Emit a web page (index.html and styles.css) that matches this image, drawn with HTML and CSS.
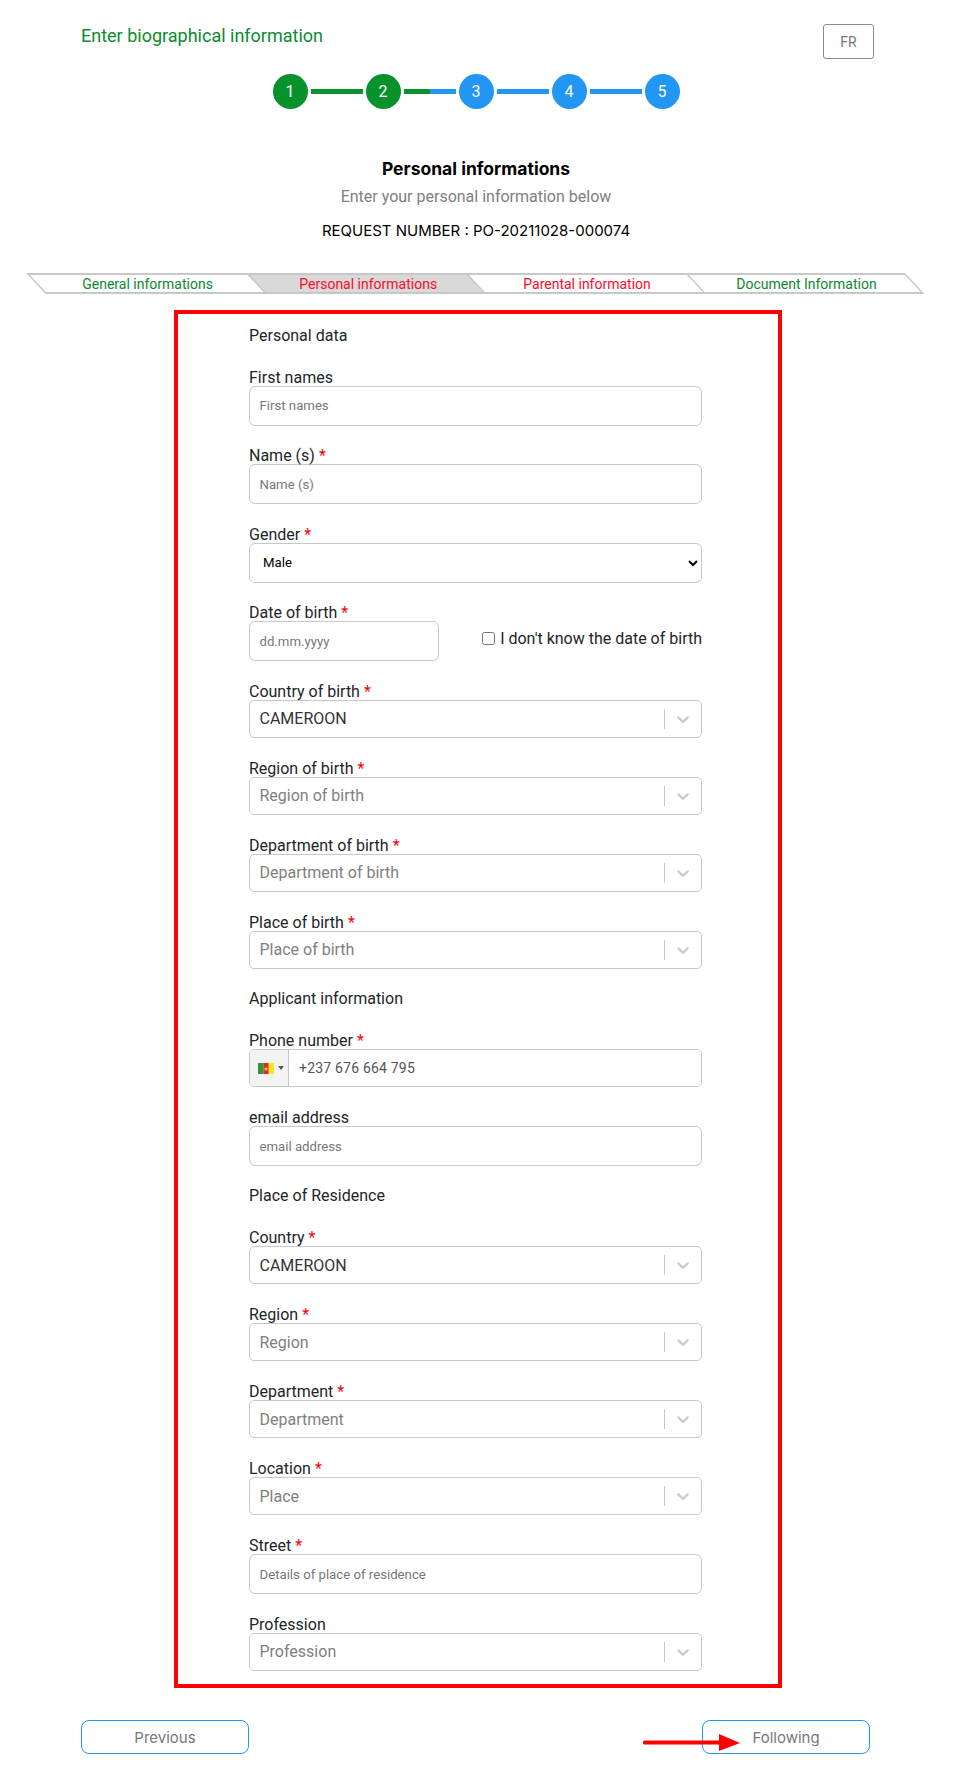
FILE: index.html
```html
<!DOCTYPE html>
<html lang="en">
<head>
<meta charset="utf-8">
<title>Enter biographical information</title>
<link rel="stylesheet" href="styles.css">
</head>
<body>
<div class="page">
  <header class="top">
    <h1 class="heading">Enter biographical information</h1>
    <button class="lang" type="button">FR</button>
  </header>

  <div class="stepper">
    <span class="dot done">1</span><span class="bar done"></span>
    <span class="dot done">2</span><span class="bar half"></span>
    <span class="dot">3</span><span class="bar"></span>
    <span class="dot">4</span><span class="bar"></span>
    <span class="dot">5</span>
  </div>

  <div class="intro">
    <h2 class="title">Personal informations</h2>
    <p class="sub">Enter your personal information below</p>
    <p class="req">REQUEST NUMBER : PO-20211028-000074</p>
  </div>

  <ul class="tabs">
    <li class="tab green"><span>General informations</span></li>
    <li class="tab red active"><span>Personal informations</span></li>
    <li class="tab red"><span>Parental information</span></li>
    <li class="tab green"><span>Document Information</span></li>
  </ul>

  <form class="frame">
    <div class="section">Personal data</div>
    <div class="field"><label>First names</label><input class="input" type="text" placeholder="First names"></div>
    <div class="field"><label>Name (s) <i>*</i></label><input class="input" type="text" placeholder="Name (s)"></div>
    <div class="field"><label>Gender <i>*</i></label><select class="input native"><option>Male</option><option>Female</option></select></div>
    <div class="field">
      <label>Date of birth <i>*</i></label>
      <div class="dob">
        <input class="input date" type="text" placeholder="dd.mm.yyyy">
        <label class="check"><input type="checkbox"><span>I don't know the date of birth</span></label>
      </div>
    </div>
    <div class="field"><label>Country of birth <i>*</i></label>
      <div class="rs"><span class="val">CAMEROON</span><b class="sep"></b><svg class="chev" viewBox="0 0 20 20"><path d="M4.516 7.548c0.436-0.446 1.043-0.481 1.576 0l3.908 3.747 3.908-3.747c0.533-0.481 1.141-0.446 1.576 0 0.436 0.445 0.408 1.197 0 1.615-0.406 0.418-4.695 4.502-4.695 4.502-0.217 0.223-0.502 0.335-0.787 0.335s-0.57-0.112-0.789-0.335c0 0-4.287-4.084-4.695-4.502s-0.436-1.17 0-1.615z"/></svg></div></div>
    <div class="field"><label>Region of birth <i>*</i></label>
      <div class="rs"><span class="ph">Region of birth</span><b class="sep"></b><svg class="chev" viewBox="0 0 20 20"><path d="M4.516 7.548c0.436-0.446 1.043-0.481 1.576 0l3.908 3.747 3.908-3.747c0.533-0.481 1.141-0.446 1.576 0 0.436 0.445 0.408 1.197 0 1.615-0.406 0.418-4.695 4.502-4.695 4.502-0.217 0.223-0.502 0.335-0.787 0.335s-0.57-0.112-0.789-0.335c0 0-4.287-4.084-4.695-4.502s-0.436-1.17 0-1.615z"/></svg></div></div>
    <div class="field"><label>Department of birth <i>*</i></label>
      <div class="rs"><span class="ph">Department of birth</span><b class="sep"></b><svg class="chev" viewBox="0 0 20 20"><path d="M4.516 7.548c0.436-0.446 1.043-0.481 1.576 0l3.908 3.747 3.908-3.747c0.533-0.481 1.141-0.446 1.576 0 0.436 0.445 0.408 1.197 0 1.615-0.406 0.418-4.695 4.502-4.695 4.502-0.217 0.223-0.502 0.335-0.787 0.335s-0.57-0.112-0.789-0.335c0 0-4.287-4.084-4.695-4.502s-0.436-1.17 0-1.615z"/></svg></div></div>
    <div class="field"><label>Place of birth <i>*</i></label>
      <div class="rs"><span class="ph">Place of birth</span><b class="sep"></b><svg class="chev" viewBox="0 0 20 20"><path d="M4.516 7.548c0.436-0.446 1.043-0.481 1.576 0l3.908 3.747 3.908-3.747c0.533-0.481 1.141-0.446 1.576 0 0.436 0.445 0.408 1.197 0 1.615-0.406 0.418-4.695 4.502-4.695 4.502-0.217 0.223-0.502 0.335-0.787 0.335s-0.57-0.112-0.789-0.335c0 0-4.287-4.084-4.695-4.502s-0.436-1.17 0-1.615z"/></svg></div></div>

    <div class="section later">Applicant information</div>
    <div class="field"><label>Phone number <i>*</i></label>
      <div class="phone">
        <div class="flagbox">
          <svg class="flag" viewBox="0 0 16 11"><rect width="5.4" height="11" fill="#2a9a3c"/><rect x="5.4" width="5.3" height="11" fill="#e3262e"/><rect x="10.7" width="5.3" height="11" fill="#fbe417"/><path d="M8 3.6l.6 1.7h1.7l-1.4 1 .5 1.7L8 7l-1.4 1 .5-1.7-1.4-1h1.7z" fill="#fbe417"/></svg>
          <span class="caret"></span>
        </div>
        <input class="tel" type="text" value="+237 676 664 795">
      </div>
    </div>
    <div class="field"><label>email address</label><input class="input" type="text" placeholder="email address"></div>

    <div class="section later">Place of Residence</div>
    <div class="field"><label>Country <i>*</i></label>
      <div class="rs"><span class="val">CAMEROON</span><b class="sep"></b><svg class="chev" viewBox="0 0 20 20"><path d="M4.516 7.548c0.436-0.446 1.043-0.481 1.576 0l3.908 3.747 3.908-3.747c0.533-0.481 1.141-0.446 1.576 0 0.436 0.445 0.408 1.197 0 1.615-0.406 0.418-4.695 4.502-4.695 4.502-0.217 0.223-0.502 0.335-0.787 0.335s-0.57-0.112-0.789-0.335c0 0-4.287-4.084-4.695-4.502s-0.436-1.17 0-1.615z"/></svg></div></div>
    <div class="field"><label>Region <i>*</i></label>
      <div class="rs"><span class="ph">Region</span><b class="sep"></b><svg class="chev" viewBox="0 0 20 20"><path d="M4.516 7.548c0.436-0.446 1.043-0.481 1.576 0l3.908 3.747 3.908-3.747c0.533-0.481 1.141-0.446 1.576 0 0.436 0.445 0.408 1.197 0 1.615-0.406 0.418-4.695 4.502-4.695 4.502-0.217 0.223-0.502 0.335-0.787 0.335s-0.57-0.112-0.789-0.335c0 0-4.287-4.084-4.695-4.502s-0.436-1.17 0-1.615z"/></svg></div></div>
    <div class="field"><label>Department <i>*</i></label>
      <div class="rs"><span class="ph">Department</span><b class="sep"></b><svg class="chev" viewBox="0 0 20 20"><path d="M4.516 7.548c0.436-0.446 1.043-0.481 1.576 0l3.908 3.747 3.908-3.747c0.533-0.481 1.141-0.446 1.576 0 0.436 0.445 0.408 1.197 0 1.615-0.406 0.418-4.695 4.502-4.695 4.502-0.217 0.223-0.502 0.335-0.787 0.335s-0.57-0.112-0.789-0.335c0 0-4.287-4.084-4.695-4.502s-0.436-1.17 0-1.615z"/></svg></div></div>
    <div class="field"><label>Location <i>*</i></label>
      <div class="rs"><span class="ph">Place</span><b class="sep"></b><svg class="chev" viewBox="0 0 20 20"><path d="M4.516 7.548c0.436-0.446 1.043-0.481 1.576 0l3.908 3.747 3.908-3.747c0.533-0.481 1.141-0.446 1.576 0 0.436 0.445 0.408 1.197 0 1.615-0.406 0.418-4.695 4.502-4.695 4.502-0.217 0.223-0.502 0.335-0.787 0.335s-0.57-0.112-0.789-0.335c0 0-4.287-4.084-4.695-4.502s-0.436-1.17 0-1.615z"/></svg></div></div>
    <div class="field"><label>Street <i>*</i></label><input class="input" type="text" placeholder="Details of place of residence"></div>
    <div class="field"><label>Profession</label>
      <div class="rs"><span class="ph">Profession</span><b class="sep"></b><svg class="chev" viewBox="0 0 20 20"><path d="M4.516 7.548c0.436-0.446 1.043-0.481 1.576 0l3.908 3.747 3.908-3.747c0.533-0.481 1.141-0.446 1.576 0 0.436 0.445 0.408 1.197 0 1.615-0.406 0.418-4.695 4.502-4.695 4.502-0.217 0.223-0.502 0.335-0.787 0.335s-0.57-0.112-0.789-0.335c0 0-4.287-4.084-4.695-4.502s-0.436-1.17 0-1.615z"/></svg></div></div>
  </form>

  <div class="nav">
    <button class="navbtn" type="button">Previous</button>
    <div class="nextwrap">
      <button class="navbtn" type="button">Following</button>
      <svg class="arrow" viewBox="0 0 97 17"><rect x="0" y="6.500" width="80" height="4" rx="1.500" fill="#f00"/><path d="M76 0l21 9-21 8z" fill="#f00"/></svg>
    </div>
  </div>
</div>
</body>
</html>
```
FILE: styles.css
```css
* { box-sizing: border-box; }
html, body { margin: 0; background: #fff; }
body { font-family: Roboto, "Liberation Sans", sans-serif; color: #212529; font-size: 16px; }
.page { width: 952px; height: 1785px; overflow: hidden; }

.top { display: flex; justify-content: space-between; align-items: flex-start; padding: 24px 78px 0 81px; }
.heading { margin: 0; font-size: 18px; font-weight: 400; line-height: 24px; color: #0a8c2c; }
.lang { width: 51px; height: 35px; background: #fff; border: 1px solid #8a8a8a; border-radius: 3px; color: #777; font: 400 14px Roboto, sans-serif; padding: 0; }

.stepper { display: flex; justify-content: center; align-items: center; gap: 3px; margin-top: 15px; }
.dot { width: 35px; height: 35px; border-radius: 50%; background: #2196f3; color: #fff; font-size: 16px; display: flex; align-items: center; justify-content: center; }
.dot.done { background: #08922c; }
.bar { width: 52px; height: 5px; background: #2196f3; }
.bar.done { background: #08922c; }
.bar.half { background: linear-gradient(90deg, #08922c 50%, #2196f3 50%); }

.intro { text-align: center; margin-top: 49px; }
.title { margin: 0; font: 700 17.500px/22px Inter, Roboto, sans-serif; color: #000; }
.sub { margin: 6px 0 0; font-size: 16px; font-weight: 400; line-height: 22px; color: #808080; }
.req { margin: 12px 0 0; font: 400 15px/22px Inter, Roboto, sans-serif; color: #000; }

.tabs { list-style: none; display: flex; width: 880px; margin: 31px 0 0 26px; padding: 0; }
.tab { width: 219.500px; height: 21px; border: 2px solid #c8c8c8; border-right-width: 0; transform: skewX(43deg); transform-origin: 0 0; display: flex; align-items: center; justify-content: center; }
.tab:last-child { border-right-width: 2px; }
.tab span { transform: skewX(-43deg); font-size: 14px; line-height: 16px; margin-left: 2px; }
.tab.active { background: #d9d9d9; }
.green { color: #0a8a2c; }
.red { color: #ff0a2a; }

.frame { width: 608px; height: 1378px; margin: 16px 0 0 173.500px; border: 4px solid #f00; padding: 11.500px 0 0 71.500px; }
.section { width: 453px; line-height: 19px; margin-bottom: 22px; }
.section.later { margin-top: 20.500px; }
.field { width: 453px; margin-bottom: 20px; }
.field > label { display: block; line-height: 19px; height: 20px; padding-top: 1px; margin-bottom: -1px; }
.field i { color: #f00; font-style: normal; }
.input { display: block; width: 100%; height: 40px; margin-bottom: -.5px; border: 1px solid #c8c8c8; border-radius: 6px; padding: 0 9.500px; font: 400 13.200px Roboto, sans-serif; color: #000; background: #fff; }
.input::placeholder { color: #777; opacity: 1; }
.native { padding-left: 9px; }

.dob { display: flex; justify-content: space-between; align-items: flex-start; }
.date { width: 190px; }
.check { display: flex; align-items: center; gap: 5px; margin-top: 7.500px; line-height: 20px; }
.check input { width: 13px; height: 13px; margin: 0; }

.rs { display: flex; align-items: center; height: 38px; border: 1px solid #c8c8c8; border-radius: 5px; padding-left: 9.500px; }
.rs > span { flex: 1; font-size: 16px; }
.val { color: #333; }
.ph { color: #808080; }
.sep { width: 1px; height: 20px; background: #c8c8c8; }
.chev { width: 20px; height: 20px; margin: 0 8px; fill: #ccc; }

.phone { display: flex; height: 38px; border: 1px solid #c8c8c8; border-radius: 5px; overflow: hidden; }
.flagbox { width: 39px; background: #f3f3f3; border-right: 1px solid #c8c8c8; display: flex; align-items: center; padding-left: 7.500px; gap: 4px; flex: none; }
.flag { width: 16px; height: 11px; }
.caret { border-left: 3px solid transparent; border-right: 3px solid transparent; border-top: 4px solid #555; }
.tel { flex: 1; border: 0; outline: 0; padding: 0 0 0 10px; font: 400 14px Roboto, sans-serif; color: #555; letter-spacing: .2px; min-width: 0; }

.nav { display: flex; justify-content: space-between; width: 789px; margin: 32px 0 0 81px; }
.nextwrap { position: relative; }
.navbtn { display: block; width: 168px; height: 34px; background: #fff; border: 1px solid #2196f3; border-radius: 8px; color: #777; font: 400 15px Inter, Roboto, sans-serif; padding: 0; }
.arrow { position: absolute; left: -59px; top: 14px; width: 97px; height: 17px; }
```
